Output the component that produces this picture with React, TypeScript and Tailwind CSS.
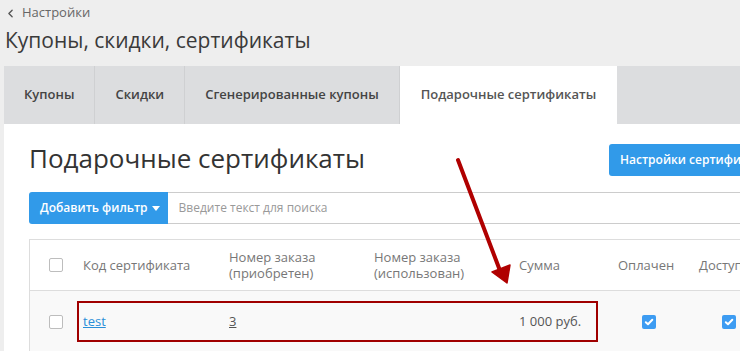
import { ChevronLeft } from 'lucide-react';

const tabs = [
  { label: 'Купоны', active: false },
  { label: 'Скидки', active: false },
  { label: 'Сгенерированные купоны', active: false },
  { label: 'Подарочные сертификаты', active: true },
];

const cols = 'grid grid-cols-[47px_146px_145px_145px_99px_81px_1fr]';

function Checkbox({ checked = false }: { checked?: boolean }) {
  if (checked) {
    return (
      <span className="flex h-[14px] w-[14px] items-center justify-center rounded-[2px] bg-[#3d9cf2]">
        <svg width="10" height="10" viewBox="0 0 10 10" fill="none">
          <path d="M1.8 5.2 4 7.2 8.3 2.8" stroke="white" strokeWidth="2" strokeLinecap="round" strokeLinejoin="round" />
        </svg>
      </span>
    );
  }
  return <span className="block h-[14px] w-[14px] rounded-[2px] border border-[#bdbdbd] bg-white" />;
}

export default function App() {
  return (
    <div className="relative h-[351px] w-[740px] overflow-hidden bg-[#eeeeee] font-['Open_Sans',sans-serif] text-[#333]">
      {/* Breadcrumb */}
      <div className="flex h-[26px] items-center pl-[4px] text-[13px] text-[#666]">
        <ChevronLeft size={13} strokeWidth={2.5} className="mr-[5px] text-[#555]" />
        Настройки
      </div>
      <h1 className="pl-[5px] text-[21px] leading-[28px] text-[#3a3a3a]">Купоны, скидки, сертификаты</h1>

      {/* Tabs */}
      <div className="mt-[12px] ml-[4px] flex h-[58px] bg-[#dcdddf]">
        {tabs.map((t) => (
          <div
            key={t.label}
            className={
              t.active
                ? 'flex items-center whitespace-nowrap bg-white px-[21px] text-[13px] font-semibold text-[#555]'
                : 'flex items-center whitespace-nowrap border-r border-[#cfd0d2] px-[20px] text-[13px] font-semibold text-[#444]'
            }
          >
            {t.label}
          </div>
        ))}
      </div>

      {/* Panel */}
      <div className="ml-[4px] h-[300px] bg-white pl-[25px]">
        <div className="flex w-[800px] items-start pt-[20px]">
          <h2 className="w-[580px] shrink-0 text-[26px] leading-[28px] text-[#333]">Подарочные сертификаты</h2>
          <button className="h-[32px] whitespace-nowrap rounded-[3px] bg-[#319ae9] px-[11px] text-[12px] font-semibold text-white">
            Настройки сертификатов
          </button>
        </div>

        <div className="mt-[16px] flex h-[32px] w-[800px]">
          <button className="flex shrink-0 items-center gap-[4px] rounded-l-[3px] bg-[#319ae9] pl-[11px] pr-[8px] text-[12px] font-semibold text-white">
            Добавить фильтр
            <svg width="8" height="5" viewBox="0 0 8 5">
              <path d="M0 0h8L4 5z" fill="white" />
            </svg>
          </button>
          <div className="flex flex-1 items-center border-y border-r border-[#cccccc] pl-[11px] text-[12px] text-[#999]">
            Введите текст для поиска
          </div>
        </div>

        {/* Table */}
        <div className="mt-[15px] w-[800px] border-l border-t border-[#dddddd]">
          <div className={`${cols} h-[51px] items-center border-b border-[#dddddd] text-[13px] leading-[16px] text-[#777]`}>
            <div className="pl-[19px]">
              <Checkbox />
            </div>
            <div className="pl-[6px]">Код сертификата</div>
            <div className="pl-[6px]">
              Номер заказа
              <br />
              (приобретен)
            </div>
            <div className="pl-[6px]">
              Номер заказа
              <br />
              (использован)
            </div>
            <div className="pl-[6px]">Сумма</div>
            <div className="pl-[6px]">Оплачен</div>
            <div className="pl-[6px]">Доступен</div>
          </div>
          <div className={`${cols} relative h-[62px] items-center bg-[#f9f9f9] text-[13px] text-[#555]`}>
            <div className="pl-[19px]">
              <Checkbox />
            </div>
            <div className="pl-[6px]">
              <a className="text-[#2a8fd8] underline">test</a>
            </div>
            <div className="pl-[6px]">
              <a className="underline">3</a>
            </div>
            <div />
            <div className="pl-[6px]">1 000 руб.</div>
            <div className="flex pl-[30px]">
              <Checkbox checked />
            </div>
            <div className="flex pl-[29px]">
              <Checkbox checked />
            </div>
            <div className="absolute left-[47px] top-[10px] h-[41px] w-[521px] border-2 border-[#a00000]" />
          </div>
        </div>
      </div>

      {/* Annotation arrow */}
      <svg className="absolute left-0 top-0" width="740" height="351" viewBox="0 0 740 351">
        <path d="M458 160 L499 268" stroke="#b00000" strokeWidth="4" strokeLinecap="round" />
        <path d="M492 272 L510 265 L507 283 Z" fill="#b00000" stroke="#b00000" strokeWidth="1.5" strokeLinejoin="round" />
      </svg>
    </div>
  );
}
